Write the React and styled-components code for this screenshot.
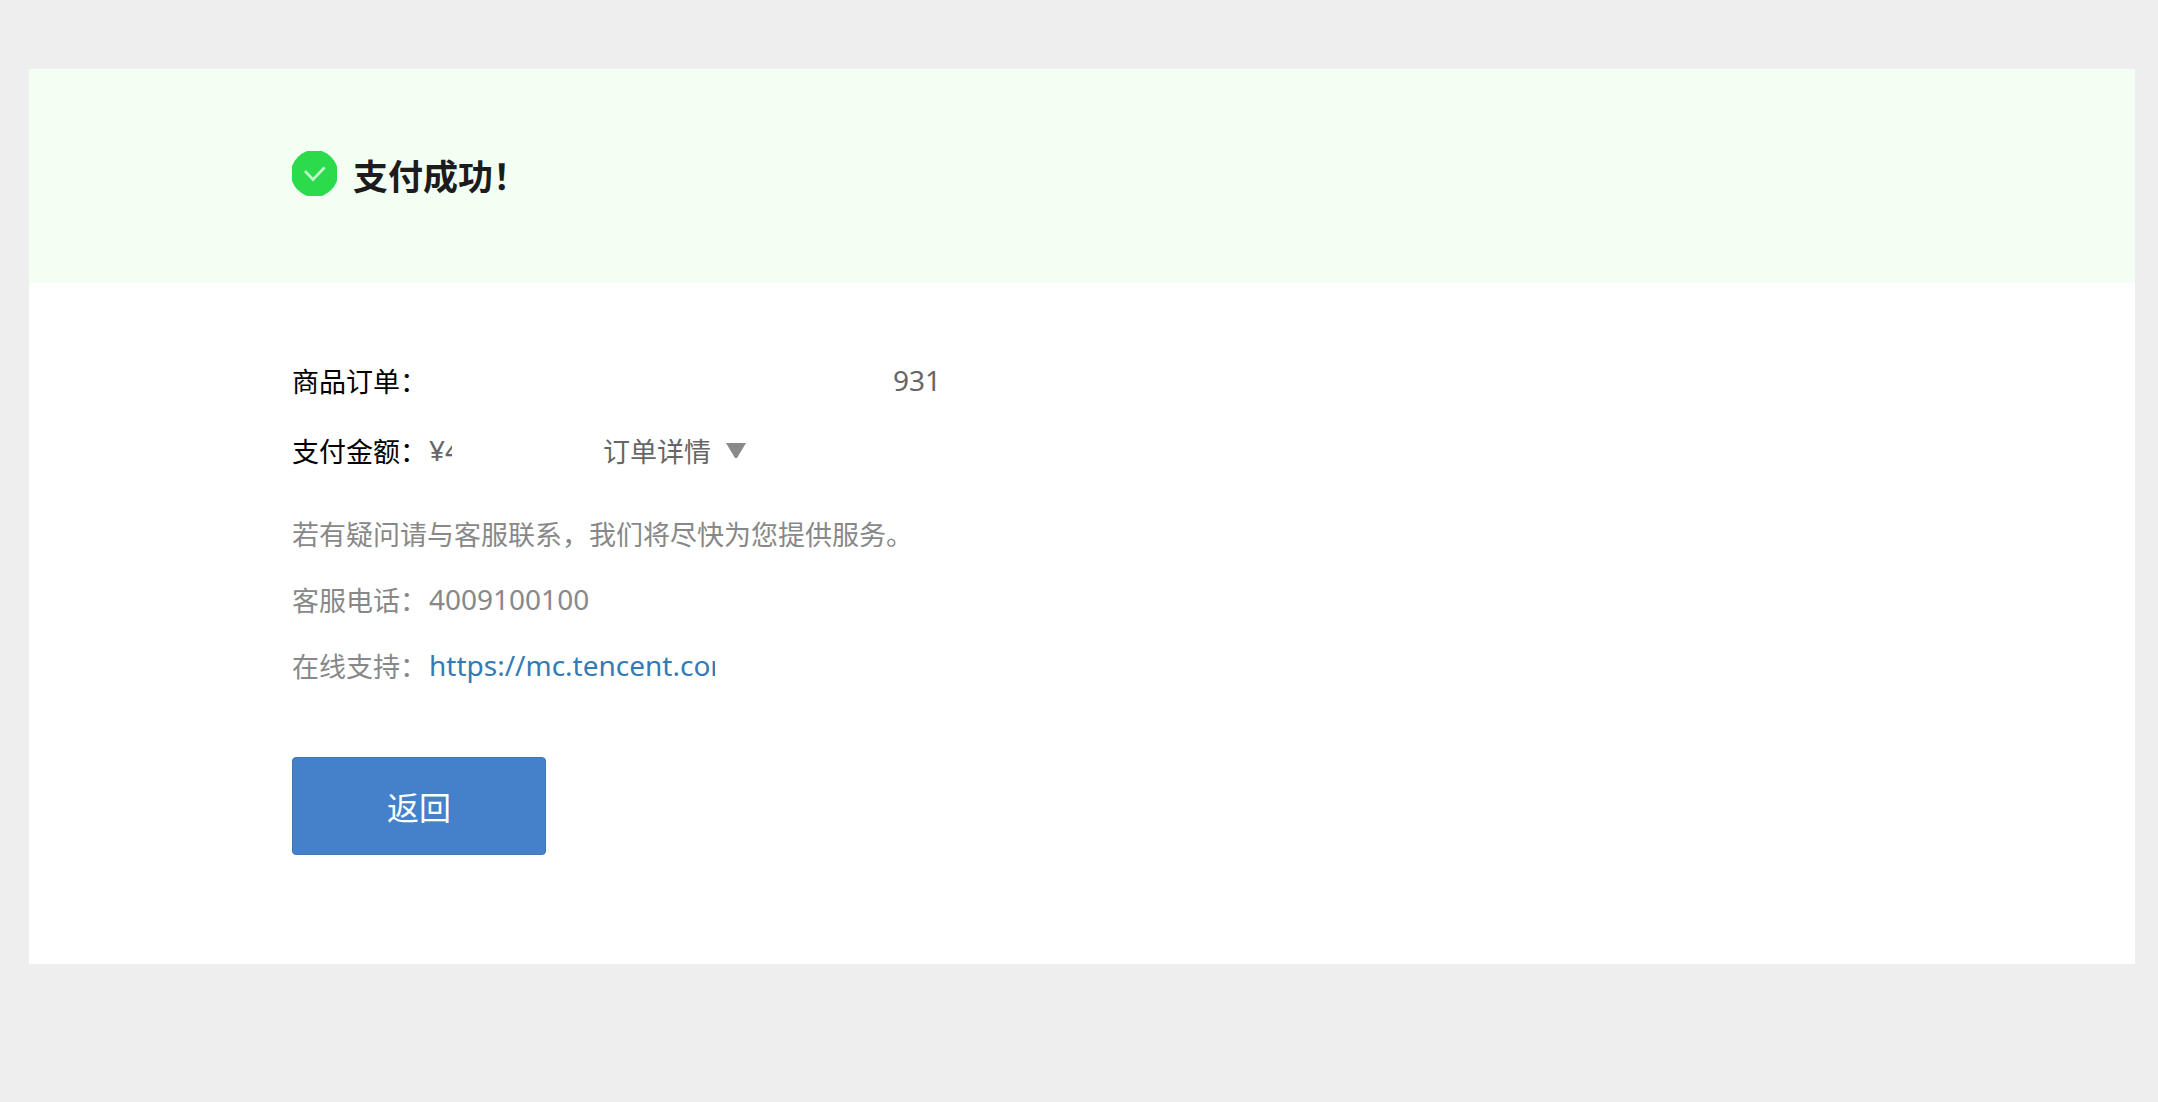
import React from "react";
import styled, { createGlobalStyle } from "styled-components";

const order = {
  numberTail: "931",
  amount: "¥4",
  phone: "4009100100",
  support: "https://mc.tencent.com",
};

const App = () => {
  return (
    <>
      <GlobalStyle />
      <Card>
        <Banner>
          <SuccessIcon viewBox="0 0 45 45" aria-hidden="true">
            <circle cx="22.5" cy="22.5" r="23.5" fill="#2bdb4b" />
            <path d="M13 20 L21 28.5 L32.5 16.5" />
          </SuccessIcon>
          <h1>支付成功！</h1>
        </Banner>
        <Content>
          <Row>
            <Label>商品订单：</Label>
            <OrderNumber>{order.numberTail}</OrderNumber>
          </Row>
          <Row>
            <Label>支付金额：</Label>
            <Amount>{order.amount}</Amount>
            <DetailButton type="button">
              订单详情
              <Arrow viewBox="0 0 20 15" aria-hidden="true">
                <path d="M0 0 H20 L11 15 H9 Z" />
              </Arrow>
            </DetailButton>
          </Row>
          <Help>
            <HelpRow>若有疑问请与客服联系，我们将尽快为您提供服务。</HelpRow>
            <HelpRow>
              客服电话：<Value>{order.phone}</Value>
            </HelpRow>
            <HelpRow>
              在线支持：<SupportLink href={order.support}>{order.support}</SupportLink>
            </HelpRow>
          </Help>
          <BackButton type="button">返回</BackButton>
        </Content>
      </Card>
    </>
  );
};

export default App;

const GlobalStyle = createGlobalStyle`
  * {
    box-sizing: border-box;
  }
  body {
    margin: 0;
    background: #eeeeee;
    font-family: "Noto Sans CJK SC", sans-serif;
    font-size: 27px;
  }
  button {
    font-family: inherit;
    cursor: pointer;
  }
`;

const Card = styled.main`
  margin: 69px 23px 69px 29px;
  background: #fff;
`;
const Banner = styled.header`
  display: flex;
  align-items: flex-start;
  gap: 0 16px;
  padding: 82px 263px 84px;
  background: #f3fff3;
  h1 {
    margin: 0;
    color: #1c1c1c;
    font-size: 35px;
    font-weight: 700;
    line-height: 48px;
  }
`;
const SuccessIcon = styled.svg`
  width: 45px;
  height: 45px;
  flex: none;
  path {
    fill: none;
    stroke: #c4f8cc;
    stroke-width: 2.6;
  }
`;
const Content = styled.section`
  padding: 62px 263px 109px;
`;
const Row = styled.div`
  display: flex;
  align-items: center;
  gap: 0 2px;
  height: 70px;
  color: #666;
`;
const Label = styled.span`
  color: #000;
`;
const Value = styled.span`
  font-family: "Noto Sans", "Noto Sans CJK SC", sans-serif;
  font-size: 28px;
`;
const OrderNumber = styled(Value)`
  margin-left: 464px;
`;
const Amount = styled(Value)`
  width: 23px;
  margin-right: 149px;
  overflow: hidden;
`;
const DetailButton = styled.button`
  display: flex;
  align-items: center;
  gap: 0 15px;
  padding: 0;
  border: 0;
  background: none;
  color: #666;
  font-size: 27px;
`;
const Arrow = styled.svg`
  width: 20px;
  height: 15px;
  fill: #8a8a8a;
`;
const Help = styled.div`
  padding: 15px 0 59px;
  color: #888;
`;
const HelpRow = styled.div`
  display: flex;
  align-items: center;
  gap: 0 2px;
  height: 66px;
`;
const SupportLink = styled.a`
  width: 286px;
  overflow: hidden;
  color: #337ab7;
  font-family: "Noto Sans", "Noto Sans CJK SC", sans-serif;
  font-size: 28px;
  text-decoration: none;
`;
const BackButton = styled.button`
  width: 254px;
  height: 98px;
  padding: 0;
  border: 1px solid #3f75b5;
  border-radius: 4px;
  background: #4580ca;
  color: #fff;
  font-size: 32px;
`;
